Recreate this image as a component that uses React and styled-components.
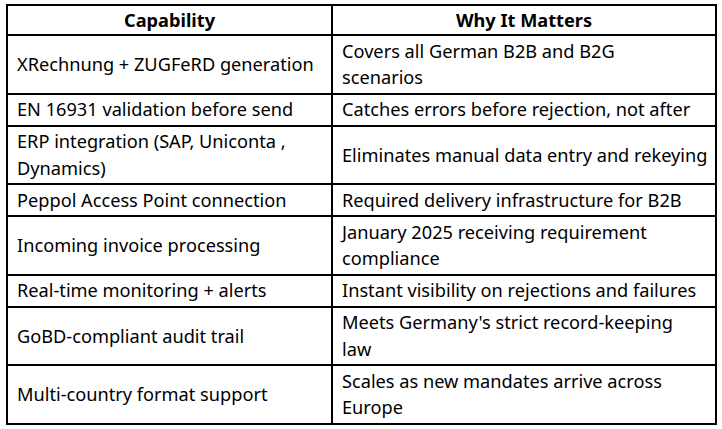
import React from "react";
import styled, { createGlobalStyle } from "styled-components";

const GlobalStyle = createGlobalStyle`
  html, body {
    margin: 0;
    padding: 0;
    background: #ffffff;
  }
  body {
    font-family: "Noto Sans", "Liberation Sans", sans-serif;
    color: #000000;
  }
`;

const Page = styled.div`
  padding: 4px 5px 0 6px;
`;

const Table = styled.table`
  border-collapse: collapse;
  width: 711px;
  table-layout: fixed;
  border: 2px solid #000;
`;

const HeadCell = styled.th`
  border: 2px solid #000;
  font-weight: 700;
  font-size: 18.2px;
  line-height: 26px;
  padding: 1px 8px;
  text-align: center;
  white-space: nowrap;
`;

const Cell = styled.td`
  border: 2px solid #000;
  font-size: 18.2px;
  line-height: 26.6px;
  padding: 1.7px 6px 1.7px 9px;
  vertical-align: middle;
  text-align: left;
  white-space: nowrap;
`;

// each cell holds its lines as they break in the document
const rows = [
  [["XRechnung + ZUGFeRD generation"], ["Covers all German B2B and B2G", "scenarios"]],
  [["EN 16931 validation before send"], ["Catches errors before rejection, not after"]],
  [["ERP integration (SAP, Uniconta ,", "Dynamics)"], ["Eliminates manual data entry and rekeying"]],
  [["Peppol Access Point connection"], ["Required delivery infrastructure for B2B"]],
  [["Incoming invoice processing"], ["January 2025 receiving requirement", "compliance"]],
  [["Real-time monitoring + alerts"], ["Instant visibility on rejections and failures"]],
  [["GoBD-compliant audit trail"], ["Meets Germany's strict record-keeping", "law"]],
  [["Multi-country format support"], ["Scales as new mandates arrive across", "Europe"]],
];

const Lines = ({ lines }) =>
  lines.map((line, i) => (
    <React.Fragment key={i}>
      {i > 0 && <br />}
      {line}
    </React.Fragment>
  ));

export default function App() {
  return (
    <>
      <GlobalStyle />
      <Page>
        <Table>
          <colgroup>
            <col style={{ width: "325px" }} />
            <col />
          </colgroup>
          <thead>
            <tr>
              <HeadCell>Capability</HeadCell>
              <HeadCell>Why It Matters</HeadCell>
            </tr>
          </thead>
          <tbody>
            {rows.map(([cap, why]) => (
              <tr key={cap[0]}>
                <Cell>
                  <Lines lines={cap} />
                </Cell>
                <Cell>
                  <Lines lines={why} />
                </Cell>
              </tr>
            ))}
          </tbody>
        </Table>
      </Page>
    </>
  );
}
